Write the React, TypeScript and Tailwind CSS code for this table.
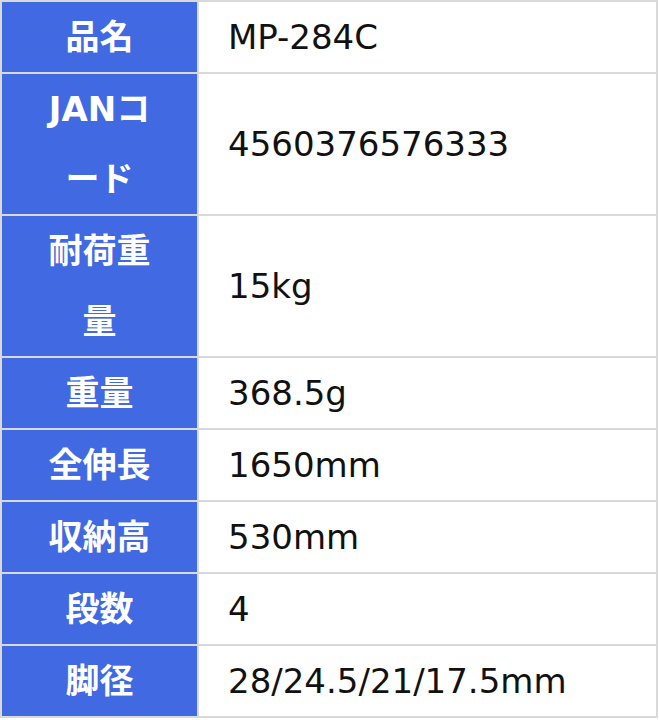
import React from "react";

const rows: { label: React.ReactNode; value: string }[] = [
  { label: "品名", value: "MP-284C" },
  { label: <>JANコ<br />ード</>, value: "4560376576333" },
  { label: <>耐荷重<br />量</>, value: "15kg" },
  { label: "重量", value: "368.5g" },
  { label: "全伸長", value: "1650mm" },
  { label: "収納高", value: "530mm" },
  { label: "段数", value: "4" },
  { label: "脚径", value: "28/24.5/21/17.5mm" },
];

export default function App() {
  return (
    <div className="bg-white min-h-[720px] w-[659px]">
      <div className="grid w-[658px] grid-cols-[195px_457px] gap-[2px] bg-[#d9d9d9] p-[2px]">
        {rows.map((r, i) => (
          <React.Fragment key={i}>
            <div className="flex items-center justify-center bg-[#4169e1] px-[29px] text-center font-['DejaVu_Sans','Noto_Sans_CJK_JP',sans-serif] text-[34px] font-bold leading-[70px] text-white">
              <div>{r.label}</div>
            </div>
            <div className="flex items-center bg-white pl-[29px] font-['DejaVu_Sans','Noto_Sans_CJK_JP',sans-serif] text-[34px] leading-[70px] text-[#111]">
              {r.value}
            </div>
          </React.Fragment>
        ))}
      </div>
    </div>
  );
}
